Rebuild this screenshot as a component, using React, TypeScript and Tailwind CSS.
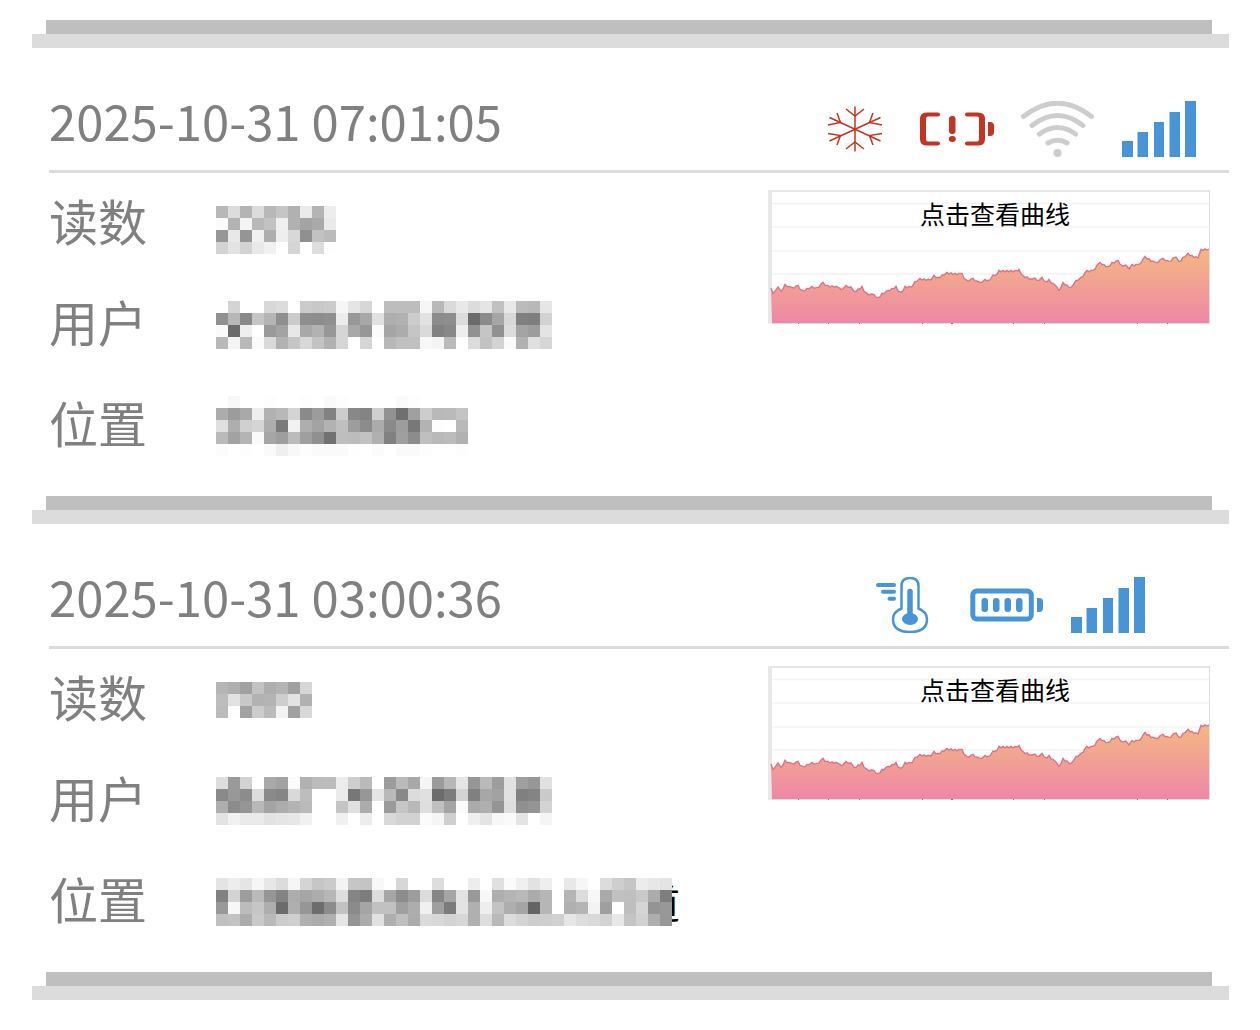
import React from "react";

type Reading = {
    time: string;
    icons: React.ReactNode[];
    fields: { label: string; mask: string[]; tail?: string }[];
};

// Every pair of hex digits is the grey level of one cell
const Mosaic = (props: { rows: string[], label: string }) => {
    const cells = props.rows.map((row) => row.split(" "));
    const cols = Math.max(...cells.map((row) => row.length));

    return (
        <svg role="img" aria-label={props.label} width={cols * 12} height={cells.length * 12}
             shapeRendering="crispEdges" className="relative z-10 block shrink-0">
            {cells.map((row, y) => row.map((grey, x) => (
                grey ?
                    <rect key={`${x}-${y}`} x={x * 12} y={y * 12} width="12" height="12" fill={`#${grey}${grey}${grey}`}/>
                    : null
            )))}
        </svg>
    );
};

const SnowIcon = () => (
    <svg viewBox="0 0 74 56" className="h-14 w-[74px]" fill="none" stroke="#c43420" strokeWidth="1.5">
        <path d="M36 5.500v45M10.500 16.500l51 23.500M10.500 40l51-23.500"/>
        <path d="M27 8l9 7 9-7M27 48l9-7 9 7"/>
        <path d="M18 12l3.500 9.500L9 24M54 12l-3.500 9.500L63 24M9 32.500l12.500 2L18 44M63 32.500l-12.500 2L54 44"/>
    </svg>
);

const BatteryLowIcon = () => (
    <svg viewBox="0 0 74 56" className="h-14 w-[74px]" fill="#c43420">
        <path d="M7 11.500h11a2 2 0 0 1 0 4H8q-2 0-2 2v21q0 2 2 2h10a2 2 0 0 1 0 4H7q-7 0-7-6v-21q0-6 7-6Z"/>
        <path d="M58 11.500H47a2 2 0 0 0 0 4h10q2 0 2 2v21q0 2-2 2H47a2 2 0 0 0 0 4h11q7 0 7-6v-21q0-6-7-6Z"/>
        <rect x="29" y="15" width="6.500" height="18" rx="3"/>
        <ellipse cx="32.300" cy="38" rx="3.500" ry="3"/>
        <path d="M68 21h2q4 0 4 4v6q0 4-4 4h-2Z"/>
    </svg>
);

const BatteryFullIcon = () => (
    <svg viewBox="0 0 74 56" className="h-14 w-[74px]" fill="#4795d6">
        <rect x="2.800" y="14" width="58.500" height="28" rx="4" fill="none" stroke="#4795d6" strokeWidth="5"/>
        <rect x="11.500" y="21" width="6.500" height="14" rx="3"/>
        <rect x="23" y="21" width="6.500" height="14" rx="3"/>
        <rect x="34.500" y="21" width="6.500" height="14" rx="3"/>
        <rect x="46" y="21" width="6.500" height="14" rx="3"/>
        <path d="M67 21h2q4 0 4 4v6q0 4-4 4h-2Z"/>
    </svg>
);

const WifiIcon = () => (
    <svg viewBox="0 0 74 56" className="h-14 w-[74px]" fill="none" stroke="#cdcdcd" strokeWidth="5" strokeLinecap="round">
        <path d="M2.500 15.500Q36.500-11 70.500 15.500"/>
        <path d="M11 24.500Q36.500 4.500 62 24.500"/>
        <path d="M18.500 33Q36.500 20 54.500 33"/>
        <path d="M27 42Q36.500 36.500 46 42"/>
        <circle cx="36.500" cy="52" r="4" fill="#cdcdcd" stroke="none"/>
    </svg>
);

const SignalIcon = () => (
    <svg viewBox="0 0 74 56" className="h-14 w-[74px]" fill="#4795d6">
        <path d="M0 40h11v16H0ZM15.500 31H26v25H15.500ZM32 21h10v35H32ZM47.500 11H58v45H47.500ZM63 0h11v56H63Z"/>
    </svg>
);

const ThermometerIcon = () => (
    <svg viewBox="0 0 74 56" className="h-14 w-[74px]" fill="none" stroke="#4795d6">
        <path d="M32.500 31.500V9q0-8 8.500-8t8.500 8v22.500q8.500 3.500 8.500 10.500 0 13-17 13t-17-13q0-7 8.500-10.500Z" strokeWidth="2.500"/>
        <path d="M41 14.500v26" strokeWidth="5.500" strokeLinecap="round"/>
        <ellipse cx="41" cy="42" rx="8" ry="6" fill="#4795d6" stroke="none"/>
        <path d="M9 8h16M14 14.800h11M20.500 21.700H25" strokeWidth="4" strokeLinecap="round"/>
    </svg>
);

const curve = [
    [3, 98], [5, 104], [10, 97], [13, 102], [17, 95], [24, 98], [30, 96], [35, 101], [44, 97], [49, 98],
    [55, 93], [60, 96], [70, 97], [73, 100], [78, 96], [83, 97], [86, 102], [94, 97], [99, 104], [106, 105],
    [110, 108], [114, 104], [120, 101], [128, 97], [133, 103], [137, 97], [144, 97], [147, 92], [152, 89], [163, 90],
    [166, 86], [170, 88], [179, 83], [187, 84], [194, 84], [199, 91], [205, 89], [212, 93], [217, 90], [222, 90],
    [225, 85], [227, 86], [231, 81], [250, 81], [251, 80], [255, 86], [264, 89], [267, 88], [269, 91], [274, 88],
    [279, 92], [281, 90], [288, 96], [291, 101], [295, 93], [303, 98], [308, 91], [313, 88], [319, 81], [325, 81],
    [332, 73], [340, 77], [344, 73], [350, 71], [355, 76], [358, 75], [361, 79], [364, 75], [371, 75], [377, 67],
    [388, 73], [395, 69], [401, 72], [408, 67], [411, 72], [420, 64], [424, 66], [430, 68], [433, 60], [441, 59],
];

// Fills the gaps between the samples with small ripples
const line = curve.flatMap(([x, y], i) => {
    const next = curve[i + 1];
    if (!next || next[0] - x < 4) return [[x, y]];
    const steps = Math.floor((next[0] - x) / 2);
    return Array.from({length: steps}, (_, n) => [
        x + n * 2,
        y + (next[1] - y) * n / steps + (n % 2 ? 0.8 : -0.6),
    ]);
}).map((point) => point.join(",")).join(" ");

const CurveButton = (props: { id: string }) => (
    <button type="button" className="relative mt-[17px] mr-[19px] flex h-[134px] w-[442px] shrink-0 cursor-pointer justify-center pl-3">
        <svg viewBox="0 0 442 134" preserveAspectRatio="none" className="absolute inset-0 h-full w-full">
            <defs>
                <linearGradient id={props.id} gradientUnits="userSpaceOnUse" x1="0" y1="58" x2="0" y2="134">
                    <stop offset="0" stopColor="#f4b980"/>
                    <stop offset="1" stopColor="#ee86a8"/>
                </linearGradient>
            </defs>
            <path d="M3 13.500h438M3 37h438M3 61h438M3 84h438" stroke="#f3f3f3" strokeWidth="1.500"/>
            <path d="M0 1h442" stroke="#e6e6e6" strokeWidth="2"/>
            <path d="M2 0v134" stroke="#e8e8e8" strokeWidth="4"/>
            <path d="M441.500 0v134" stroke="#dedede"/>
            <polygon points={`4,133 ${line} 441,133`} fill={`url(#${props.id})`}/>
            <polyline points={line} fill="none" stroke="#df7189" strokeWidth="1.4"/>
            <path d="M4 133.500h438" stroke="#dedede"/>
            <path d="M30 133.500h1M60 133.500h1M91 133.500h1M154 133.500h1M183 133.500h2M245 133.500h1M276 133.500h1M369 133.500h1M399 133.500h1" stroke="#777"/>
        </svg>
        <span className="relative text-[25px] leading-[46px] text-black">点击查看曲线</span>
    </button>
);

const Divider = () => (
    <div>
        <div className="mr-12 ml-[46px] h-3.5 bg-[#bfbfbf]"/>
        <div className="mr-[31px] ml-8 h-3.5 bg-[#dcdcdc]"/>
    </div>
);

const ReadingCard = (props: { reading: Reading, id: string }) => {
    const {time, icons, fields} = props.reading;

    return (
        <section className="mr-[31px] ml-[49px] pb-5">
            <header className="flex h-[125px] items-end border-b-[3px] border-[#dcdcdc] pb-[13px]">
                <h2 className="flex-1 text-[49px] leading-[74px] whitespace-nowrap">{time}</h2>
                <div className="flex w-[444px] justify-center gap-[27px]">
                    {icons.map((icon, index) => (
                        <React.Fragment key={index}>{icon}</React.Fragment>
                    ))}
                </div>
            </header>
            <div className="flex items-start">
                <dl className="min-w-0 flex-1">
                    {fields.map((field) => (
                        <div key={field.label} className="flex h-[101px] items-center">
                            <dt className="w-[167px] shrink-0 pb-2 text-[49px] leading-[74px]">{field.label}</dt>
                            <dd className="flex items-center">
                                <Mosaic rows={field.mask} label={field.label}/>
                                {field.tail ?
                                    <span className="-ml-8 text-[40px] leading-[52px] text-black">{field.tail}</span>
                                    : null
                                }
                            </dd>
                        </div>
                    ))}
                </dl>
                <CurveButton id={props.id}/>
            </div>
        </section>
    );
};

const readings: Reading[] = [
    {
        time: "2025-10-31 07:01:05",
        icons: [<SnowIcon/>, <BatteryLowIcon/>, <WifiIcon/>, <SignalIcon/>],
        fields: [
            {
                label: "读数",
                mask: [
                    "",
                    "b8 dc b4 dc b8 c5 b1 eb b4 ed",
                    "fb b3 f4 b8 c2 ef b1 a4 a9 ea",
                    "97 e8 95 f0 ae ee d8 90 c2 bb",
                    "d3 e3 d3 e9 f1 ff d5 ff dd fe",
                ],
            },
            {
                label: "用户",
                mask: [
                    "ff d4 ff ff d8 dc ff cb c8 cb f6 e5 d7 ff bd bd bd f6 b8 da e8 dc e5 c1 e8 bb b8 e6",
                    "91 b7 89 c5 b5 8f cb 8f 8d 8f ec 98 a8 e1 ae b1 cc e2 8c 8e dc 6b 8b a6 d8 80 7e d2",
                    "fa 6a ef ff 9a a3 e8 a8 b2 97 d6 a8 97 fb a5 ac c5 da 81 88 ee 92 c5 91 dc a4 9d e4",
                    "b9 f3 b9 fa d9 b2 c5 d8 c3 b1 d6 ff d6 ff b8 c0 c0 f8 f4 ba ff dc c2 d3 fa b1 e0 d6",
                ],
            },
            {
                label: "位置",
                mask: [
                    "ff f8 ff ff fd ff ff fd ff fa fd ff ff ff ff fa fd ff ff ff ff",
                    "ac 9c a9 ee b1 b8 d4 8a 9c 82 cd 88 84 cf 92 6f a0 cd b9 ba c4",
                    "e0 ae d0 d5 ad 7a f2 ae a3 b2 bf 9d 8c ab 8a 9d 78 b3 fd ff b9",
                    "ba a2 b4 fa a6 9e bb 9f 90 71 be bc c2 b0 81 9f 8c bf b9 bc b1",
                    "fc ff fd ff fa ef f8 fd fa fa fa fe ff fb ff fa fa fd ff ff fd",
                ],
            },
        ],
    },
    {
        time: "2025-10-31 03:00:36",
        icons: [<ThermometerIcon/>, <BatteryFullIcon/>, <SignalIcon/>],
        fields: [
            {
                label: "读数",
                mask: [
                    "b5 af a1 c2 ae b4 a0 d6",
                    "bd e2 c8 b2 b4 ce e3 b1",
                    "bb fe a2 cc bb f3 a0 d8",
                ],
            },
            {
                label: "用户",
                mask: [
                    "dd 9a d2 ff a9 a2 fb b1 bb bc ec ce ba ff 9c ba a8 f5 9b b7 e5 96 ba 9d e1 9f 97 e1",
                    "8a 98 8c dd 8a 86 d9 bd ff ff eb 77 97 e5 b9 89 dc e0 6c 7c d3 80 a7 a2 e1 80 84 ca",
                    "ae 8c 95 b8 a4 ac b3 ba ff ff c5 e0 ac ff 9b c6 b8 de c0 a5 fa ab af 95 de 90 94 d3",
                    "e3 f1 ea ea e2 e5 e7 f1 ff ff f0 ff ed ff d9 d2 d2 fb f5 cf ff ef e4 f7 fa e4 ff f5",
                ],
            },
            {
                label: "位置",
                mask: [
                    "e4 ed e5 f6 e7 dc f6 d4 c6 cb f3 c6 c4 f8 ff d7 ff ff dd ff ff ed ff e0 fb f0 e2 ee ff e8 f6 ff dc ce c6 ec e7 e4",
                    "81 d3 9d ba 96 83 ad a6 ac b6 de 85 7d dd a6 8d 9d dc 86 a5 e3 99 f8 ae b4 b9 ab b6 ff b5 dc f7 aa c1 bf c9 ac 7e",
                    "99 f7 bc c6 ae 6b af 96 6d 8c c2 8b a5 c1 c1 a0 ad f0 9f 7b e3 b0 ee c3 ae a5 64 b6 ff b0 b5 f3 9f ff be d5 94 98",
                    "c0 c3 ac c9 b9 cb cf b0 ab b0 e5 94 ac e1 ae bf ac db d8 d3 d7 b0 dd b9 dc d4 cd ce d0 e6 dd d9 d2 e8 c4 d1 ae 97",
                ],
                tail: "道",
            },
        ],
    },
];

const App = () => {
    return (
        <main className="bg-white pt-5 pb-[30px] font-['Noto_Sans_CJK_SC',sans-serif] text-[#808080]">
            <Divider/>
            {readings.map((reading, index) => (
                <React.Fragment key={reading.time}>
                    <ReadingCard reading={reading} id={`curve-${index}`}/>
                    <Divider/>
                </React.Fragment>
            ))}
        </main>
    );
};

export default App;
